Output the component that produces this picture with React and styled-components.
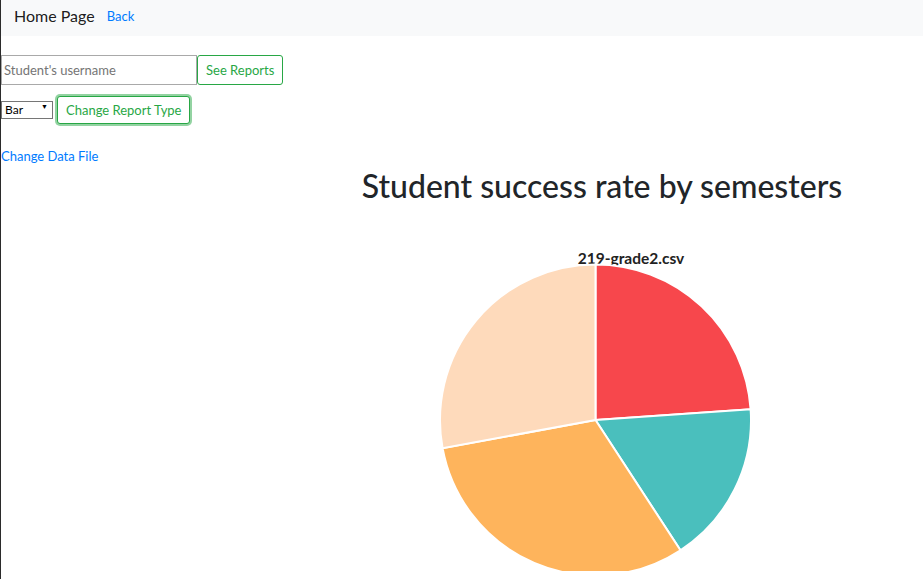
import React from "react";
import styled, { createGlobalStyle } from "styled-components";

const GlobalStyle = createGlobalStyle`
  html, body {
    margin: 0;
    padding: 0;
    background: #fff;
  }
  body {
    font-family: "Lato", "Segoe UI", "Liberation Sans", sans-serif;
    color: #212529;
    border-left: 1px solid #2b2b2b;
    min-height: 579px;
    box-sizing: border-box;
  }
`;

const NavBar = styled.nav`
  display: flex;
  align-items: center;
  height: 36px;
  padding: 0 13px;
  gap: 12px;
  background: #f8f9fa;
`;

const Brand = styled.span`
  font-size: 16px;
  color: rgba(0, 0, 0, 0.9);
  padding-bottom: 5px;
`;

const Link = styled.a`
  color: #007bff;
  font-size: ${(p) => p.size || 13}px;
  padding-bottom: ${(p) => p.pb || 0}px;
  text-decoration: none;
  cursor: pointer;
`;

const Controls = styled.div`
  display: flex;
  flex-direction: column;
  align-items: flex-start;
  padding-top: 19px;
`;

const Row = styled.div`
  display: flex;
  align-items: center;
  margin-bottom: ${(p) => p.mb || 0}px;
`;

const TextInput = styled.input`
  width: 196px;
  height: 30px;
  box-sizing: border-box;
  border: 1px solid #a9a9a9;
  padding: 0 2px;
  font-family: inherit;
  font-size: 13px;
  color: #333;
  outline: none;
  &::placeholder {
    color: #757575;
  }
`;

const OutlineButton = styled.button`
  height: ${(p) => (p.focused ? 28 : 30)}px;
  box-sizing: border-box;
  margin-left: ${(p) => (p.focused ? 4 : 0)}px;
  padding: 0 8px;
  border: 1px solid #28a745;
  border-radius: 3px;
  background: #fff;
  color: #28a745;
  font-family: inherit;
  font-size: 13px;
  box-shadow: ${(p) => (p.focused ? "0 0 0 2px rgba(40, 167, 69, 0.5)" : "none")};
  cursor: pointer;
`;

const SelectWrap = styled.div`
  position: relative;
  align-self: flex-start;
  margin-top: 2px;
  width: 52px;
  height: 18px;
  &::after {
    content: "▼";
    position: absolute;
    right: 5px;
    top: 4px;
    font-size: 7px;
    color: #000;
    pointer-events: none;
  }
`;

const Select = styled.select`
  appearance: none;
  width: 100%;
  height: 100%;
  box-sizing: border-box;
  font-family: inherit;
  font-size: 12px;
  padding: 0 3px;
  border: 1px solid #767676;
  border-radius: 0;
  background: #fff;
  color: #000;
`;

const ChartSection = styled.section`
  padding-left: 280px;
  margin-top: 3px;
  text-align: center;
`;

const Title = styled.h2`
  margin: 0;
  font-size: 32px;
  font-weight: 500;
  line-height: 1.2;
  color: #212529;
`;

const ChartSvg = styled.svg`
  display: block;
  margin-top: 36px;
`;

const slices = [
  { value: 0.239, color: "#f7474c" },
  { value: 0.169, color: "#4abfbd" },
  { value: 0.313, color: "#feb45c" },
  { value: 0.279, color: "#fedabb" },
];

function Pie({ cx, cy, r }) {
  let start = -Math.PI / 2;
  return slices.map((s, i) => {
    const end = start + s.value * Math.PI * 2;
    const x1 = cx + r * Math.cos(start);
    const y1 = cy + r * Math.sin(start);
    const x2 = cx + r * Math.cos(end);
    const y2 = cy + r * Math.sin(end);
    const large = end - start > Math.PI ? 1 : 0;
    const d = `M${cx},${cy} L${x1},${y1} A${r},${r} 0 ${large} 1 ${x2},${y2} Z`;
    start = end;
    return <path key={i} d={d} fill={s.color} stroke="#fff" strokeWidth="2" />;
  });
}

export default function App() {
  return (
    <>
      <GlobalStyle />
      <NavBar>
        <Brand>Home Page</Brand>
        <Link size={13} pb={4}>Back</Link>
      </NavBar>
      <Controls>
        <Row mb={11}>
          <TextInput placeholder="Student's username" />
          <OutlineButton>See Reports</OutlineButton>
        </Row>
        <Row mb={24}>
          <SelectWrap>
            <Select defaultValue="Bar">
              <option>Bar</option>
              <option>Pie</option>
            </Select>
          </SelectWrap>
          <OutlineButton focused>Change Report Type</OutlineButton>
        </Row>
        <Link size={13}>Change Data File</Link>
      </Controls>
      <ChartSection>
        <Title>Student success rate by semesters</Title>
        <ChartSvg width="643" height="330" viewBox="0 0 643 330">
          <text
            x="350"
            y="23"
            textAnchor="middle"
            fontFamily="Lato, 'Segoe UI', sans-serif"
            fontWeight="700"
            fontSize="15.5"
            fill="#222"
          >
            219-grade2.csv
          </text>
          <Pie cx={314.5} cy={179} r={155.5} />
        </ChartSvg>
      </ChartSection>
    </>
  );
}
